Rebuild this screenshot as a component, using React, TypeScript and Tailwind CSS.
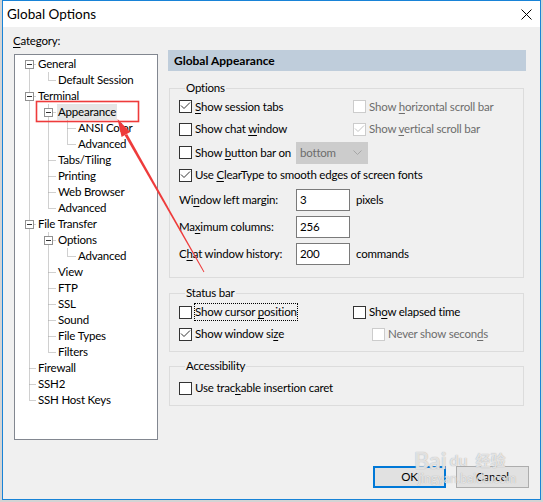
import React from "react";

type Node = { label: string; level: 0 | 1 | 2; box?: boolean; selected?: boolean };

const tree: Node[] = [
  { label: "General", level: 0, box: true },
  { label: "Default Session", level: 1 },
  { label: "Terminal", level: 0, box: true },
  { label: "Appearance", level: 1, box: true, selected: true },
  { label: "ANSI Color", level: 2 },
  { label: "Advanced", level: 2 },
  { label: "Tabs/Tiling", level: 1 },
  { label: "Printing", level: 1 },
  { label: "Web Browser", level: 1 },
  { label: "Advanced", level: 1 },
  { label: "File Transfer", level: 0, box: true },
  { label: "Options", level: 1, box: true },
  { label: "Advanced", level: 2 },
  { label: "View", level: 1 },
  { label: "FTP", level: 1 },
  { label: "SSL", level: 1 },
  { label: "Sound", level: 1 },
  { label: "File Types", level: 1 },
  { label: "Filters", level: 1 },
  { label: "Firewall", level: 0 },
  { label: "SSH2", level: 0 },
  { label: "SSH Host Keys", level: 0 },
];

// tree line geometry (inner coords of the tree box)
const cy = (i: number) => 9.5 + 16 * i;
const lx = [14.5, 33.5, 52.5];
const textX = [23, 43, 63];
// [level, first child row, last child row]
const verticals: [number, number, number][] = [
  [1, 1, 1],
  [1, 3, 9],
  [2, 4, 5],
  [1, 11, 18],
  [2, 12, 12],
];

function Mn({ t, i }: { t: string; i: number }) {
  return (
    <>
      {t.slice(0, i)}
      <span className="underline underline-offset-2">{t[i]}</span>
      {t.slice(i + 1)}
    </>
  );
}

function Check({ checked, disabled }: { checked?: boolean; disabled?: boolean }) {
  return (
    <span
      className={`flex h-[13px] w-[13px] shrink-0 items-center justify-center border bg-white ${
        disabled ? "border-[#cccccc]" : "border-[#333333]"
      }`}
    >
      {checked && (
        <svg width="11" height="11" viewBox="0 0 11 11">
          <path d="M1 4.5 L4 7.5 L10 1.5" fill="none" stroke={disabled ? "#c4c4c4" : "#333333"} strokeWidth="1" />
        </svg>
      )}
    </span>
  );
}

function CheckRow({
  t,
  u,
  checked,
  disabled,
  focus,
}: {
  t: string;
  u: number;
  checked?: boolean;
  disabled?: boolean;
  focus?: boolean;
}) {
  return (
    <div className="flex items-center gap-[3px]">
      <Check checked={checked} disabled={disabled} />
      <span
        className={`leading-[16px] whitespace-nowrap ${disabled ? "text-[#6d6d6d]" : "text-black"} ${
          focus ? "outline-1 outline-dotted outline-black" : ""
        }`}
      >
        <Mn t={t} i={u} />
      </span>
    </div>
  );
}

function NumField({ label, u, value, unit }: { label: string; u: number; value: string; unit?: string }) {
  return (
    <div className="flex h-[22px] items-center">
      <span className="w-[117px] whitespace-nowrap">
        <Mn t={label} i={u} />
      </span>
      <div className="flex h-[22px] w-[54px] items-center border border-[#7a7a7a] bg-white pl-[3px]">{value}</div>
      {unit && <span className="ml-[6px]">{unit}</span>}
    </div>
  );
}

function TreeLines() {
  return (
    <svg className="pointer-events-none absolute left-0 top-0" width="142" height="384">
      <g stroke="#a0a0a0" strokeDasharray="1 1" strokeWidth="1" fill="none">
        <line x1={lx[0]} y1={cy(0)} x2={lx[0]} y2={cy(21)} />
        {verticals.map(([lv, a, b], k) => (
          <line key={k} x1={lx[lv]} y1={cy(a) - 8} x2={lx[lv]} y2={cy(b)} />
        ))}
        {tree.map((n, i) => (
          <line key={i} x1={lx[n.level]} y1={cy(i)} x2={textX[n.level] - 2} y2={cy(i)} />
        ))}
      </g>
      {tree.map((n, i) =>
        n.box ? (
          <g key={i}>
            <rect x={lx[n.level] - 4} y={cy(i) - 4} width="8" height="8" fill="white" stroke="#919191" />
            <line x1={lx[n.level] - 2.5} y1={cy(i)} x2={lx[n.level] + 2.5} y2={cy(i)} stroke="#333333" />
          </g>
        ) : null
      )}
    </svg>
  );
}

export default function App() {
  return (
    <div className="relative h-[502px] w-[543px] overflow-hidden bg-[#d4d4d4] pl-[2px] font-[Lato,sans-serif] text-[11.5px] tracking-[-0.2px] text-black">
      {/* dialog */}
      <div className="flex h-[500px] w-[539px] flex-col border border-[#1883d7] bg-[#f0f0f0]">
        {/* title bar */}
        <div className="flex h-[26px] items-start justify-between bg-white">
          <span className="pl-[4px] pt-[4px] text-[13.5px] leading-[18px] tracking-normal">Global Options</span>
          <svg className="mr-[8px] mt-[8px]" width="11" height="11" viewBox="0 0 11 11">
            <path d="M0.5 0.5 L10.5 10.5 M10.5 0.5 L0.5 10.5" stroke="#000" strokeWidth="1" />
          </svg>
        </div>

        {/* body */}
        <div className="flex flex-1 flex-col">
          <div className="flex">
            {/* category tree */}
            <div className="flex flex-col pl-[11px]">
              <span className="-ml-[1px] mt-[6px] leading-[16px]">
                <Mn t="Category:" i={0} />
              </span>
              <div className="relative mt-[5px] h-[386px] w-[144px] border border-[#828790] bg-white pt-[1px]">
                <TreeLines />
                {tree.map((n, i) => (
                  <div
                    key={i}
                    className={`flex h-[16px] items-center ${
                      n.level === 0 ? "pl-[22px]" : n.level === 1 ? "pl-[42px]" : "pl-[62px]"
                    }`}
                  >
                    <span
                      className={`relative h-[16px] whitespace-nowrap px-[1px] leading-[16px] ${
                        n.selected ? "bg-[#e5e5e5]" : ""
                      }`}
                    >
                      {n.label}
                    </span>
                  </div>
                ))}
              </div>
            </div>

            {/* right panel */}
            <div className="ml-[10px] mt-[23px] flex w-[358px] flex-col">
              <div className="flex h-[21px] items-center bg-[#bfcddb] pl-[6px] text-[12px] font-bold tracking-normal">
                Global Appearance
              </div>

              <fieldset className="ml-[1px] mt-[9px] w-[355px] min-w-0 border border-[#dcdcdc] pb-[12px] pl-[9px]">
                <legend className="ml-[6px] px-[1px] leading-[16px]">Options</legend>
                <div className="flex h-[21px] items-center">
                  <div className="w-[174px]">
                    <CheckRow t="Show session tabs" u={0} checked />
                  </div>
                  <CheckRow t="Show horizontal scroll bar" u={5} disabled />
                </div>
                <div className="flex h-[24px] items-center">
                  <div className="w-[174px]">
                    <CheckRow t="Show chat window" u={10} />
                  </div>
                  <CheckRow t="Show vertical scroll bar" u={5} checked disabled />
                </div>
                <div className="flex h-[23px] items-center">
                  <div className="w-[117px]">
                    <CheckRow t="Show button bar on" u={5} />
                  </div>
                  <div className="flex h-[22px] w-[72px] items-center justify-between bg-[#cccccc] pl-[4px] pr-[6px] text-[#6d6d6d]">
                    <span>bottom</span>
                    <svg width="9" height="5" viewBox="0 0 9 5">
                      <path d="M0.5 0.5 L4.5 4.5 L8.5 0.5" fill="none" stroke="#a6a6a6" strokeWidth="1" />
                    </svg>
                  </div>
                </div>
                <div className="flex h-[22px] items-center">
                  <CheckRow t="Use ClearType to smooth edges of screen fonts" u={4} checked />
                </div>
                <div className="mt-[3px] flex flex-col gap-[5px]">
                  <NumField label="Window left margin:" u={2} value="3" unit="pixels" />
                  <NumField label="Maximum columns:" u={2} value="256" />
                  <NumField label="Chat window history:" u={1} value="200" unit="commands" />
                </div>
              </fieldset>

              <fieldset className="ml-[1px] mt-[7px] w-[355px] min-w-0 border border-[#dcdcdc] pb-[6px] pl-[9px]">
                <legend className="ml-[6px] px-[1px] leading-[16px]">Status bar</legend>
                <div className="flex h-[22px] items-center">
                  <div className="w-[174px]">
                    <CheckRow t="Show cursor position" u={12} focus />
                  </div>
                  <CheckRow t="Show elapsed time" u={2} />
                </div>
                <div className="flex h-[22px] items-center">
                  <div className="w-[174px]">
                    <CheckRow t="Show window size" u={14} checked />
                  </div>
                  <div className="ml-[19px]">
                    <CheckRow t="Never show seconds" u={16} disabled />
                  </div>
                </div>
              </fieldset>

              <fieldset className="ml-[1px] mt-[6px] w-[355px] min-w-0 border border-[#dcdcdc] pb-[6px] pl-[9px]">
                <legend className="ml-[6px] px-[1px] leading-[16px]">Accessibility</legend>
                <div className="mt-[3px] flex h-[22px] items-center">
                  <CheckRow t="Use trackable insertion caret" u={8} />
                </div>
              </fieldset>
            </div>
          </div>

          {/* buttons */}
          <div className="mt-auto flex justify-end gap-[10px] pb-[11px] pr-[11px]">
            <button className="flex h-[22px] w-[73px] items-center justify-center border-2 border-[#0078d7] bg-[#e1e1e1]">
              OK
            </button>
            <button className="flex h-[22px] w-[73px] items-center justify-center border border-[#adadad] bg-[#e1e1e1]">
              Cancel
            </button>
          </div>
        </div>
      </div>

      {/* screenshot annotation */}
      <svg className="pointer-events-none absolute left-0 top-0" width="543" height="502">
        <rect x="36.5" y="101.5" width="102" height="20" fill="none" stroke="#ee3b3b" strokeWidth="1.6" />
        <polygon points="127.2,133.9 204.4,271.8 203.6,272.2 124.6,135.3" fill="#ee3b3b" />
        <polygon points="117.5,119 130.2,132.1 121.6,137.1" fill="#ee3b3b" />
      </svg>

      {/* watermark */}
      <div className="pointer-events-none absolute left-[414px] top-[448px] flex flex-col items-start tracking-normal text-white/70 [text-shadow:0_0_1px_#9a9a9a]">
        <div className="flex items-end leading-[24px]">
          <span className="text-[23px] font-bold">Bai</span>
          <span className="ml-[3px] text-[16px] font-bold">du</span>
          <span className="ml-[8px] font-['Noto_Sans_CJK_SC',sans-serif] text-[15px] font-bold">经验</span>
        </div>
        <span className="ml-[4px] text-[12.5px] leading-[14px]">jingyan.baidu.com</span>
      </div>
    </div>
  );
}
